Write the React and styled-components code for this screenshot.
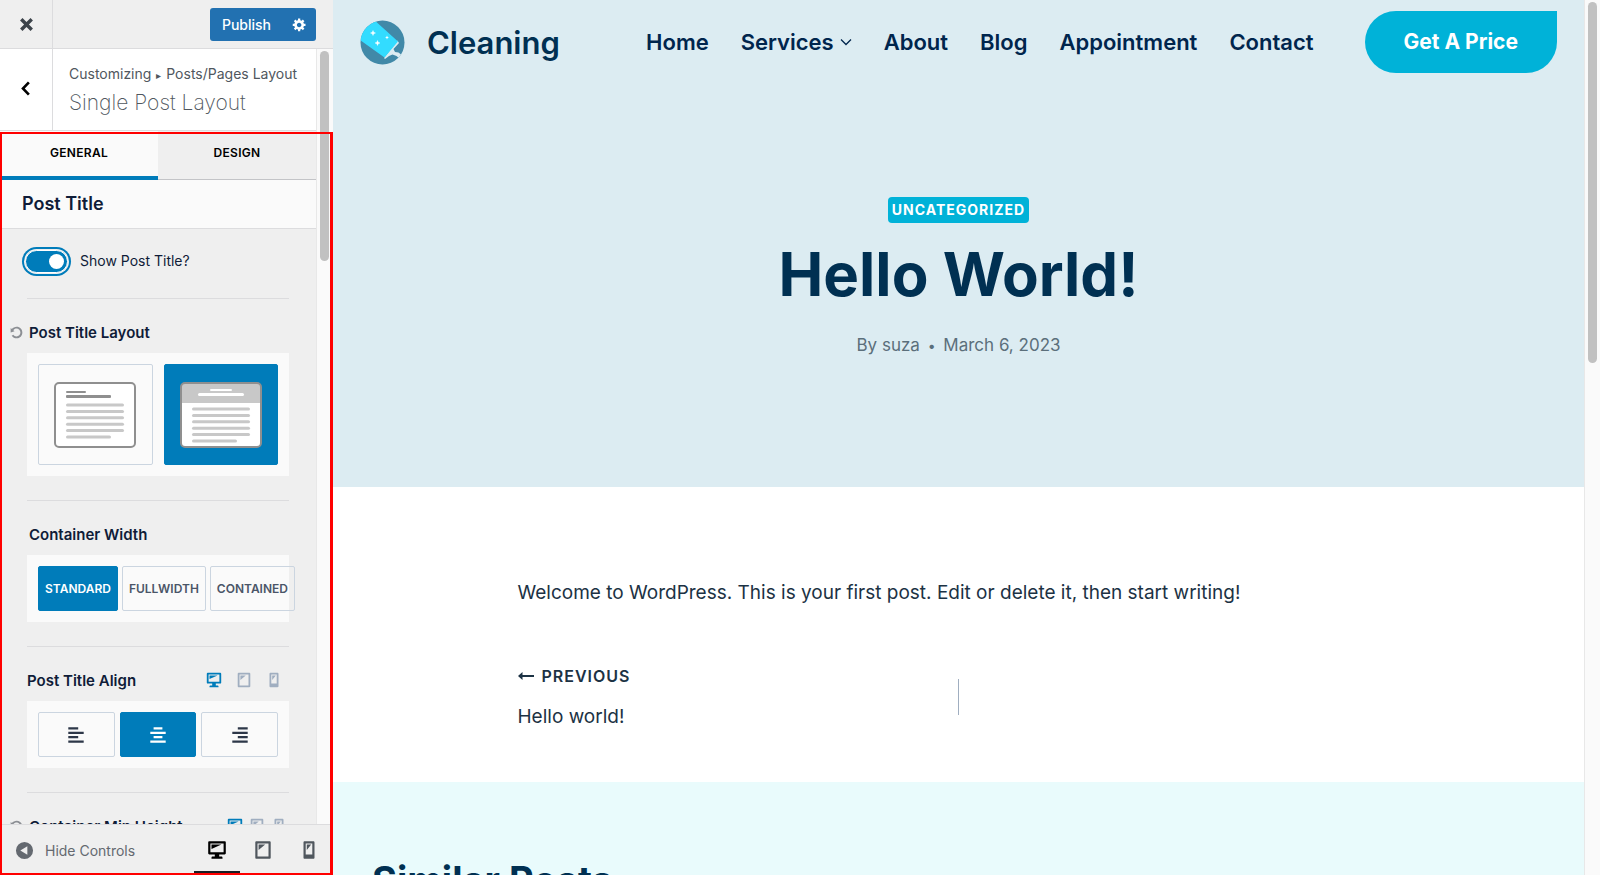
import React, { useState } from 'react'
import styled, { createGlobalStyle } from 'styled-components'

const icons = {
  desktop: 'M3 2h14c.55 0 1 .45 1 1v10c0 .55-.45 1-1 1h-5v2h2c.55 0 1 .45 1 1v1H5v-1c0-.55.45-1 1-1h2v-2H3c-.55 0-1-.45-1-1V3c0-.55.45-1 1-1zm13 10V4H4v8h12zM5 5h9L5 9V5z',
  tablet: 'M4 2h12c.55 0 1 .45 1 1v14c0 .55-.45 1-1 1H4c-.55 0-1-.45-1-1V3c0-.55.45-1 1-1zm11 14V4H5v12h10zM6 5h6l-6 5V5z',
  mobile: 'M6 2h8c.55 0 1 .45 1 1v14c0 .55-.45 1-1 1H6c-.55 0-1-.45-1-1V3c0-.55.45-1 1-1zm7 12V4H7v10h6zM8 5h4l-4 5V5z',
  left: 'M12 5V3H3v2h9zm5 4V7H3v2h14zm-5 4v-2H3v2h9zm5 4v-2H3v2h14z',
  center: 'M14 5V3H6v2h8zm3 4V7H3v2h14zm-3 4v-2H6v2h8zm3 4v-2H3v2h14z',
  right: 'M17 5V3H8v2h9zm0 4V7H3v2h14zm0 4v-2H8v2h9zm0 4v-2H3v2h14z',
  reset: 'M10.25 1.02c5.1 0 8.75 4.04 8.75 9s-3.65 9-8.75 9c-3.2 0-6.02-1.59-7.68-3.99l2.59-1.52c1.1 1.5 2.86 2.51 4.84 2.51 3.3 0 6-2.79 6-6s-2.7-6-6-6c-1.97 0-3.72 1-4.82 2.49L7 8.02l-6 2v-7L2.89 4.6c1.69-2.17 4.36-3.58 7.36-3.58z',
  gear: 'M18 12h-2.18c-.17.7-.44 1.35-.81 1.93l1.54 1.54-2.1 2.1-1.54-1.54c-.58.36-1.23.63-1.91.79V19H8v-2.18c-.68-.16-1.33-.43-1.91-.79l-1.54 1.54-2.12-2.12 1.54-1.54c-.36-.58-.63-1.23-.79-1.91H1V9.03h2.17c.16-.7.44-1.35.8-1.94L2.43 5.55l2.1-2.1 1.54 1.54c.58-.37 1.24-.64 1.93-.81V2h3v2.18c.68.16 1.33.43 1.91.79l1.54-1.54 2.12 2.12-1.54 1.54c.36.59.64 1.24.8 1.94H18V12zm-8.5 1.5c1.66 0 3-1.34 3-3s-1.34-3-3-3-3 1.34-3 3 1.34 3 3 3z',
  close: 'M4.4 6.5l2.1-2.1L10 7.9l3.5-3.5 2.1 2.1L12.1 10l3.5 3.5-2.1 2.1L10 12.1l-3.5 3.5-2.1-2.1L7.9 10z',
  back: 'M13.5 4.6L8.2 10l5.3 5.4-2 1.9L4.4 10l7.1-7.3z',
  collapse: 'M10 1a9 9 0 1 0 0 18 9 9 0 0 0 0-18zm3 4.6v8.8L5.6 10z',
}

const Icon = ({ name, size = 20 }) => (
  <svg width={size} height={size} viewBox="0 0 20 20" fill="currentColor" aria-hidden="true">
    <path fillRule="evenodd" d={icons[name]} />
  </svg>
)

const bars = [0, 1, 2, 3, 4]

const PlainLayout = () => (
  <svg width="82" height="66" viewBox="0 0 82 66" aria-hidden="true">
    <rect x="1" y="1" width="80" height="64" rx="4" fill="#fff" stroke="#8f8f8f" strokeWidth="2" />
    <rect x="12" y="9" width="20" height="2" rx="1" fill="#8f8f8f" />
    <rect x="12" y="13" width="45" height="3" rx="1" fill="#8f8f8f" />
    {bars.map((n) => <rect key={n} x="12" y={21.5 + n * 6.4} width="58" height="3" rx="1.5" fill="#c8c8c8" />)}
    <rect x="12" y="53.5" width="45" height="3" rx="1.5" fill="#c8c8c8" />
  </svg>
)

const HeroLayout = () => (
  <svg width="82" height="66" viewBox="0 0 82 66" aria-hidden="true">
    <rect x="1" y="1" width="80" height="64" rx="4" fill="#fff" />
    <path d="M1 21V5a4 4 0 0 1 4-4h72a4 4 0 0 1 4 4v16z" fill="#c8c8c8" />
    <rect x="1" y="1" width="80" height="64" rx="4" fill="none" stroke="#8f8f8f" strokeWidth="2" />
    <rect x="30" y="7" width="22" height="2" rx="1" fill="#fff" />
    <rect x="18" y="11" width="46" height="3" rx="1.5" fill="#fff" />
    {bars.map((n) => <rect key={n} x="12" y={25.5 + n * 6.4} width="58" height="3" rx="1.5" fill="#c8c8c8" />)}
    <rect x="12" y="57.5" width="45" height="3" rx="1.5" fill="#c8c8c8" />
  </svg>
)

const Logo = () => (
  <svg width="45" height="45" viewBox="0 0 45 45" aria-hidden="true">
    <defs>
      <clipPath id="logo-disc"><circle cx="22.5" cy="22.5" r="22" /></clipPath>
    </defs>
    <g clipPath="url(#logo-disc)">
      <rect width="45" height="45" fill="#4189a8" />
      <path d="M37.5 20.5l1.5 2.5-5.500 6 1.500 3 3.500.5 5 4-3 3-4-3.500-4-1.500-3.500 1.500-4 3-1-1z" fill="#dcecf2" />
      <path d="M17.5 3L10-4-4 6v11l28.500 20.500L38 21.500z" fill="#33dcff" />
    </g>
    <g fill="#fff">
      <path d="M13 10.500l.7 1.800 1.800.7-1.800.7-.7 1.800-.7-1.800-1.800-.7 1.800-.7z" stroke="#fff" strokeWidth=".4" />
      <path d="M17.500 20.500l.7 1.800 1.800.7-1.800.7-.7 1.800-.7-1.800-1.800-.7 1.800-.7z" stroke="#fff" strokeWidth=".4" />
      <path d="M27 15.500l.6 1.400 1.400.6-1.400.6-.6 1.400-.6-1.400-1.400-.6 1.400-.6z" />
    </g>
  </svg>
)

const devices = [
  ['desktop', 'Desktop'],
  ['tablet', 'Tablet'],
  ['mobile', 'Mobile'],
]

const DeviceSwitch = ({ value, onChange, tight }) => (
  <DeviceRow $tight={tight}>
    {devices.map(([id, label]) => (
      <DeviceButton key={id} type="button" aria-label={label} $on={value === id} onClick={() => onChange(id)}>
        <Icon name={id} size={18} />
      </DeviceButton>
    ))}
  </DeviceRow>
)

const Customizer = () => {
  const [tab, setTab] = useState('General')
  const [layout, setLayout] = useState('hero')
  const [width, setWidth] = useState('Standard')
  const [align, setAlign] = useState('center')
  const [device, setDevice] = useState('desktop')

  return (
    <Sidebar>
      <TopBar>
        <CloseButton type="button" aria-label="Close"><Icon name="close" size={23} /></CloseButton>
        <PublishGroup>
          <PublishButton type="button">Publish</PublishButton>
          <GearButton type="button" aria-label="Publish settings"><Icon name="gear" size={15} /></GearButton>
        </PublishGroup>
      </TopBar>

      <Scroller>
        <Controls>
          <PanelHead>
            <BackButton type="button" aria-label="Back"><Icon name="back" size={19} /></BackButton>
            <PanelTitle>
              <Crumb>Customizing <small>▸</small> Posts/Pages Layout</Crumb>
              <h1>Single Post Layout</h1>
            </PanelTitle>
          </PanelHead>

          <Tabs>
            {['General', 'Design'].map((t) => (
              <Tab key={t} type="button" $on={tab === t} onClick={() => setTab(t)}>{t}</Tab>
            ))}
          </Tabs>
          <GroupTitle>Post Title</GroupTitle>

          <ToggleRow>
            <Toggle type="checkbox" defaultChecked />
            Show Post Title?
          </ToggleRow>

          <Field>
            <FieldHead $indent={-17}>
              <ResetButton type="button" aria-label="Reset layout"><Icon name="reset" size={13} /></ResetButton>
              <h3>Post Title Layout</h3>
            </FieldHead>
            <Choices $gap={11}>
              <Choice type="button" aria-label="Normal" $tall $on={layout === 'normal'} onClick={() => setLayout('normal')}>
                <PlainLayout />
              </Choice>
              <Choice type="button" aria-label="Above content" $tall $on={layout === 'hero'} onClick={() => setLayout('hero')}>
                <HeroLayout />
              </Choice>
            </Choices>
          </Field>

          <Field>
            <FieldHead $indent={2}><h3>Container Width</h3></FieldHead>
            <Choices $gap={4}>
              {['Standard', 'Fullwidth', 'Contained'].map((w) => (
                <TextChoice key={w} type="button" $on={width === w} onClick={() => setWidth(w)}>{w}</TextChoice>
              ))}
            </Choices>
          </Field>

          <Field>
            <FieldHead $indent={0}>
              <h3>Post Title Align</h3>
              <DeviceSwitch value={device} onChange={setDevice} />
            </FieldHead>
            <Choices $gap={5}>
              {['left', 'center', 'right'].map((a) => (
                <Choice key={a} type="button" aria-label={'Align ' + a} $on={align === a} onClick={() => setAlign(a)}>
                  <Icon name={a} size={22} />
                </Choice>
              ))}
            </Choices>
          </Field>

          <Field>
            <FieldHead $indent={-17}>
              <ResetButton type="button" aria-label="Reset height"><Icon name="reset" size={13} /></ResetButton>
              <h3>Container Min Height</h3>
              <DeviceSwitch value={device} onChange={setDevice} tight />
            </FieldHead>
          </Field>
        </Controls>
        <Track $width={17}><Thumb $length={210} /></Track>
      </Scroller>

      <Footer>
        <HideButton type="button"><Icon name="collapse" size={19} />Hide Controls</HideButton>
        {devices.map(([id, label]) => (
          <FooterDevice key={id} type="button" aria-label={'Preview ' + label} $on={device === id} onClick={() => setDevice(id)}>
            <Icon name={id} size={22} />
          </FooterDevice>
        ))}
      </Footer>
      <Highlight />
    </Sidebar>
  )
}

const Site = () => {
  return (
    <Preview>
      <Page>
        <Hero>
          <SiteHeader>
            <Brand href="#home"><Logo />Cleaning</Brand>
            <Nav>
              <NavLink href="#home">Home</NavLink>
              <NavLink href="#services">
                Services
                <svg width="12" height="8" viewBox="0 0 12 8" fill="none" stroke="currentColor" strokeWidth="1.3" aria-hidden="true">
                  <path d="M1 1.5l5 5 5-5" />
                </svg>
              </NavLink>
              <NavLink href="#about">About</NavLink>
              <NavLink href="#blog">Blog</NavLink>
              <NavLink href="#appointment">Appointment</NavLink>
              <NavLink href="#contact">Contact</NavLink>
            </Nav>
            <PriceButton href="#price">Get A Price</PriceButton>
          </SiteHeader>
          <Category href="#uncategorized">Uncategorized</Category>
          <HeroTitle>Hello World!</HeroTitle>
          <Meta>By suza <i>•</i> March 6, 2023</Meta>
        </Hero>

        <Article>
          <p>Welcome to WordPress. This is your first post. Edit or delete it, then start writing!</p>
          <PostNav>
            <Previous href="#previous">
              <small>
                <svg width="16" height="10" viewBox="0 0 16 10" fill="currentColor" aria-hidden="true">
                  <path d="M0 5l4.5-4v3H16v2H4.500v3z" />
                </svg>
                Previous
              </small>
              Hello world!
            </Previous>
            <NavDivider />
          </PostNav>
        </Article>

        <Similar><h2>Similar Posts</h2></Similar>
      </Page>
      <Track $width={16}><Thumb $length={361} /></Track>
    </Preview>
  )
}

const App = () => {
  return (
    <Shell>
      <GlobalStyle />
      <Customizer />
      <Site />
    </Shell>
  )
}

export default App



const GlobalStyle = createGlobalStyle`
* {
  box-sizing:border-box;
}
body {
  margin:0;
  font-family:Inter, "Liberation Sans", sans-serif;
}
h1, h2, h3, p {
  margin:0;
}
button {
  font-family:inherit;
  border:0;
  padding:0;
  margin:0;
  background:none;
  color:inherit;
  cursor:pointer;
}
a {
  color:inherit;
  text-decoration:none;
}
svg {
  display:block;
  flex:none;
}
`

const Shell = styled.div`
display:flex;
height:100vh;
overflow:hidden;
`

// customizer panel
const Sidebar = styled.aside`
position:relative;
display:flex;
flex-direction:column;
flex:none;
width:333px;
background:#efefef;
color:#0f1c38;
`
const TopBar = styled.div`
display:flex;
justify-content:space-between;
align-items:center;
height:49px;
flex:none;
padding-right:17px;
border-bottom:1px solid #dcdcde;
`
const CloseButton = styled.button`
display:grid;
place-items:center;
width:53px;
height:48px;
color:#3c434a;
border-right:1px solid #dcdcde;
`
const PublishGroup = styled.div`
display:flex;
height:33px;
background:#2271b1;
color:#fff;
border-radius:3px;
`
const PublishButton = styled.button`
padding:0 12px;
font-size:14px;
font-weight:500;
`
const GearButton = styled.button`
padding:0 9px;
`
const Scroller = styled.div`
display:flex;
flex:1;
min-height:0;
`
const Controls = styled.div`
flex:1;
min-width:0;
overflow:hidden;
`
const Track = styled.div`
flex:none;
width:${(p) => p.$width}px;
padding:2px 3px;
background:#fafafa;
border-left:1px solid #e8e8e8;
`
const Thumb = styled.div`
width:9px;
height:${(p) => p.$length}px;
border-radius:5px;
background:#c1c1c1;
`
const PanelHead = styled.div`
display:flex;
height:82px;
background:#fff;
border-bottom:1px solid #dcdcde;
`
const BackButton = styled.button`
display:grid;
place-items:center;
width:53px;
padding-bottom:2px;
color:#000;
border-right:1px solid #dcdcde;
`
const PanelTitle = styled.div`
padding:15px 0 0 16px;
color:#50575e;
white-space:nowrap;
h1 {
  font-size:21px;
  font-weight:200;
  line-height:36px;
}
`
const Crumb = styled.div`
font-size:14px;
line-height:20px;
small {
  margin:0 1px;
  font-size:10px;
}
`
const Tabs = styled.div`
display:flex;
height:49px;
`
const Tab = styled.button`
flex:1;
padding-bottom:${(p) => (p.$on ? '3px' : '6px')};
font-size:12px;
font-weight:600;
text-transform:uppercase;
letter-spacing:0.3px;
color:#000;
background:${(p) => (p.$on ? '#fafafa' : '#efefef')};
border-bottom:${(p) => (p.$on ? '4px solid #007cba' : '1px solid #c3c4c7')};
`
const GroupTitle = styled.h2`
padding:0 22px;
font-size:18px;
font-weight:600;
line-height:48px;
background:#fafafa;
border-bottom:1px solid #dcdcde;
`
const ToggleRow = styled.label`
display:flex;
align-items:center;
gap:12px;
padding:16px 25px 21px;
font-size:14px;
line-height:32px;
`
const Toggle = styled.input`
appearance:none;
width:43px;
height:23px;
margin:0;
padding:3px;
border-radius:12px;
background:#8d96a0;
box-shadow:0 0 0 1px #efefef, 0 0 0 3px #007cba;
border:1px solid #fff;
cursor:pointer;
&::before {
  content:'';
  display:block;
  width:15px;
  height:15px;
  border-radius:50%;
  background:#fff;
}
&:checked {
  background:#007cba;
}
&:checked::before {
  margin-left:auto;
}
`
const Field = styled.section`
margin:0 27px 24px;
padding-top:16px;
border-top:1px solid #dcdcde;
`
const FieldHead = styled.div`
display:flex;
align-items:center;
gap:6px;
height:34px;
margin:0 0 4px ${(p) => p.$indent}px;
h3 {
  font-size:15px;
  font-weight:600;
  white-space:nowrap;
}
`
const ResetButton = styled.button`
color:#8c8f94;
`
const DeviceRow = styled.div`
display:flex;
gap:${(p) => (p.$tight ? '4px' : '12px')};
margin-left:auto;
margin-right:${(p) => (p.$tight ? '1px' : '6px')};
`
const DeviceButton = styled.button`
color:${(p) => (p.$on ? '#007cba' : '#a0aec0')};
`
const Choices = styled.div`
display:flex;
gap:${(p) => p.$gap}px;
padding:11px;
background:#fafafa;
`
const Choice = styled.button`
flex:1;
display:grid;
place-items:center;
height:${(p) => (p.$tall ? 101 : 45)}px;
border:1px solid ${(p) => (p.$on ? '#007cba' : '#cbd5e0')};
border-radius:2px;
color:${(p) => (p.$on ? '#fff' : '#2d3748')};
background:${(p) => (p.$on ? '#007cba' : 'transparent')};
`
const TextChoice = styled(Choice)`
flex:none;
padding:0 6px;
font-size:12px;
font-weight:600;
text-transform:uppercase;
color:${(p) => (p.$on ? '#fff' : '#4a5568')};
`
const Footer = styled.div`
display:flex;
flex:none;
height:51px;
padding-right:1px;
border-top:1px solid #dcdcde;
`
const HideButton = styled.button`
display:flex;
align-items:center;
gap:11px;
margin-right:auto;
padding-left:15px;
font-size:14px;
color:#646970;
`
const FooterDevice = styled.button`
display:grid;
place-items:center;
width:46px;
color:${(p) => (p.$on ? '#000' : '#50575e')};
box-shadow:inset 0 -4px ${(p) => (p.$on ? '#191e23' : 'transparent')};
`
const Highlight = styled.div`
position:absolute;
top:132px;
right:0;
bottom:0;
left:0;
border:2px solid #f00;
border-right-width:3px;
pointer-events:none;
`

// site preview
const Preview = styled.div`
display:flex;
flex:1;
min-width:0;
`
const Page = styled.main`
flex:1;
min-width:0;
overflow:hidden;
color:#1c3244;
`
const Hero = styled.section`
display:flex;
flex-direction:column;
align-items:center;
padding-bottom:127px;
background:#dcecf2;
`
const SiteHeader = styled.header`
display:flex;
align-items:center;
align-self:stretch;
height:84px;
padding:0 27px;
margin-bottom:113px;
color:#003052;
`
const Brand = styled.a`
display:flex;
align-items:center;
gap:22px;
font-size:31px;
font-weight:600;
`
const Nav = styled.nav`
display:flex;
gap:32px;
margin:0 51px 0 auto;
`
const NavLink = styled.a`
display:flex;
align-items:center;
gap:6px;
font-size:22px;
font-weight:600;
color:#00254d;
`
const PriceButton = styled.a`
padding:0 39px;
font-size:21px;
font-weight:700;
line-height:62px;
color:#fff;
background:#00b2d8;
border-radius:31px 0 31px 31px;
`
const Category = styled.a`
padding:0 4px;
font-size:14px;
font-weight:700;
line-height:26px;
letter-spacing:1px;
text-transform:uppercase;
color:#fff;
background:#00b2d8;
border-radius:4px;
`
const HeroTitle = styled.h1`
margin-top:10px;
font-size:60px;
font-weight:700;
line-height:82px;
color:#003052;
`
const Meta = styled.div`
margin-top:16px;
font-size:17px;
line-height:28px;
color:#5b6f7b;
i {
  margin:0 3px;
  font-size:14px;
  font-style:normal;
}
`
const Article = styled.article`
width:882px;
max-width:100%;
margin:0 auto;
padding:90px 0 49px;
font-size:19px;
line-height:32px;
`
const PostNav = styled.div`
display:flex;
align-items:center;
margin-top:51px;
`
const Previous = styled.a`
flex:1;
small {
  display:flex;
  align-items:center;
  gap:8px;
  margin-bottom:9px;
  font-size:16px;
  font-weight:600;
  letter-spacing:1px;
  text-transform:uppercase;
}
`
const NavDivider = styled.span`
flex:1;
height:36px;
border-left:1px solid #a0aec0;
`
const Similar = styled.section`
padding:72px 39px;
background:#e9fbfc;
h2 {
  font-size:38px;
  font-weight:700;
  line-height:52px;
  color:#003052;
}
`
